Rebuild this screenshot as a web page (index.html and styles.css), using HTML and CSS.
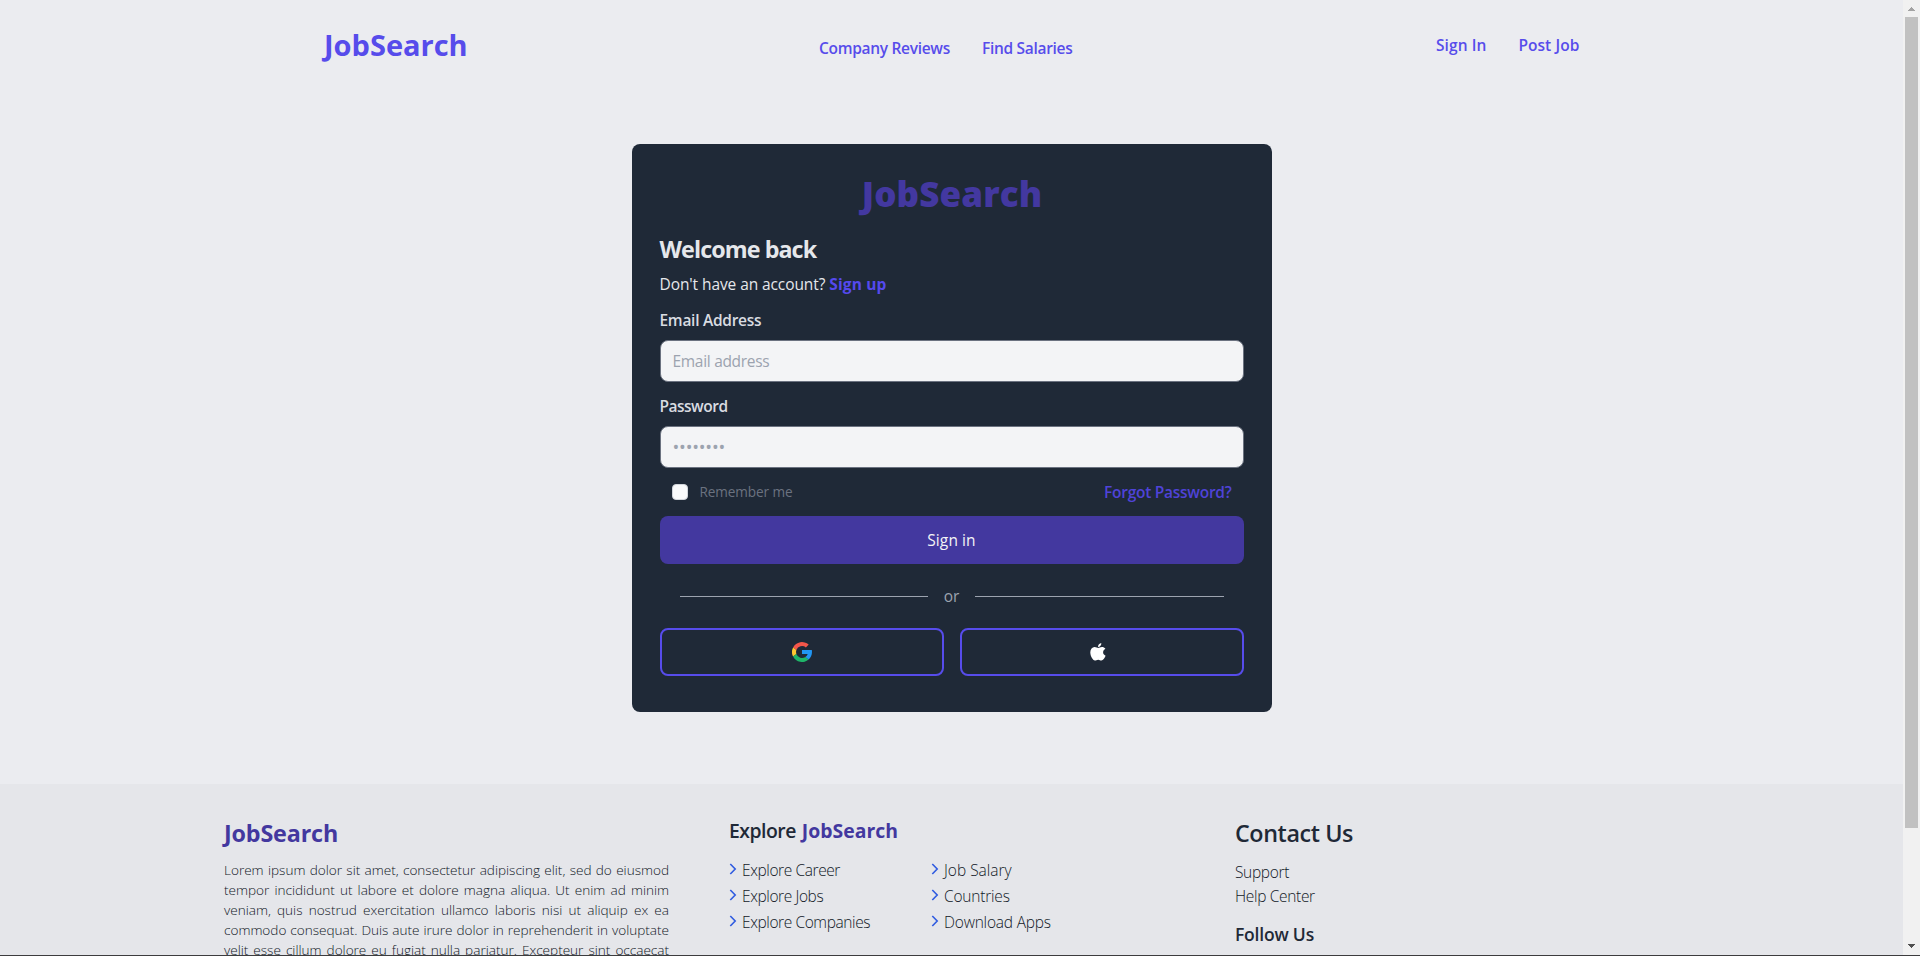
FILE: index.html
```html
<!DOCTYPE html>
<html lang="en">
<head>
<meta charset="utf-8">
<title>JobSearch</title>
<link rel="stylesheet" href="styles.css">
</head>
<body>
<div class="window">
  <div class="page">
    <header class="header">
      <a class="brand">JobSearch</a>
      <nav class="nav-main"><a class="nav-link">Company Reviews</a><a class="nav-link">Find Salaries</a></nav>
      <nav class="nav-user"><a class="signin-link">Sign In</a><a class="signin-link">Post Job</a></nav>
    </header>
    <main class="main">
      <form class="card">
        <h1 class="card-logo">JobSearch</h1>
        <h2 class="welcome">Welcome back</h2>
        <p class="signup"><span class="signup-text">Don't have an account?</span><a class="signup-link">Sign up</a></p>
        <label class="label" for="email">Email Address</label>
        <input class="input" id="email" type="text" placeholder="Email address">
        <label class="label label-password" for="password">Password</label>
        <input class="input input-password" id="password" type="password" placeholder="••••••••">
        <div class="options">
          <label class="remember"><span class="checkbox"></span>Remember me</label>
          <a class="forgot">Forgot Password?</a>
        </div>
        <button class="submit" type="button">Sign in</button>
        <div class="divider"><span class="rule"></span><span class="or">or</span><span class="rule"></span></div>
        <div class="providers">
          <button class="provider" type="button" aria-label="Google">
            <svg width="20" height="20" viewBox="0 0 20 20" fill="none">
              <path d="M1.100 5.400A10 10 0 0 1 16.700 2.600L13.900 5.400A6 6 0 0 0 4.400 8z" fill="#f4564a"/>
              <path d="M4.400 12A6 6 0 0 1 4.400 8L1.100 5.400a10 10 0 0 0 0 9.200z" fill="#ffc832"/>
              <path d="M1.100 14.600A10 10 0 0 0 16.600 17.500L13.400 15A6 6 0 0 1 4.400 12z" fill="#1fb569"/>
              <path d="M19.800 8H10v4h5.700a5.200 5.200 0 0 1-2.300 3l3.200 2.500c2.600-2.200 3.900-5.500 3.200-9.500z" fill="#2196f3"/>
            </svg>
          </button>
          <button class="provider provider-apple" type="button" aria-label="Apple">
            <svg width="16" height="18" viewBox="0 0 16 18" fill="#fff">
              <path d="M13.100 9.600c0-1.900.9-3.100 2.300-3.900-.9-1.200-2.100-1.700-3.500-1.700-1.500 0-2.800.9-3.600.9S6 4 4.600 4C2.200 4.100.3 6.100.3 9.300c0 3.800 2.500 8.200 4.600 8.200 1.200 0 1.700-.8 3.300-.8 1.500 0 2 .8 3.200.8 1.700 0 3.200-2.700 4.200-4.800-1.600-.7-2.500-1.800-2.500-3.100z"/>
              <path d="M8 4.100C7.900 2 9.600.3 11.300.100 11.600 2.200 9.900 4.100 8 4.100z"/>
            </svg>
          </button>
        </div>
      </form>
    </main>
    <footer class="footer">
      <section class="about">
        <h3 class="about-title">JobSearch</h3>
        <p class="about-text">Lorem ipsum dolor sit amet, consectetur adipiscing elit, sed do eiusmod<br>tempor incididunt ut labore et dolore magna aliqua. Ut enim ad minim<br>veniam, quis nostrud exercitation ullamco laboris nisi ut aliquip ex ea<br>commodo consequat. Duis aute irure dolor in reprehenderit in voluptate<br>velit esse cillum dolore eu fugiat nulla pariatur. Excepteur sint occaecat</p>
      </section>
      <section class="explore">
        <h3 class="explore-title"><span class="explore-word">Explore</span><span class="explore-brand">JobSearch</span></h3>
        <div class="links">
          <a class="link"><svg class="chevron" viewBox="0 0 8 12"><path d="M1.300 1 6.200 6l-4.900 5"/></svg>Explore Career</a>
          <a class="link link-wide"><svg class="chevron" viewBox="0 0 8 12"><path d="M1.300 1 6.200 6l-4.900 5"/></svg>Job Salary</a>
          <a class="link"><svg class="chevron" viewBox="0 0 8 12"><path d="M1.300 1 6.200 6l-4.900 5"/></svg>Explore Jobs</a>
          <a class="link link-mid"><svg class="chevron" viewBox="0 0 8 12"><path d="M1.300 1 6.200 6l-4.900 5"/></svg>Countries</a>
          <a class="link"><svg class="chevron" viewBox="0 0 8 12"><path d="M1.300 1 6.200 6l-4.900 5"/></svg>Explore Companies</a>
          <a class="link link-mid"><svg class="chevron" viewBox="0 0 8 12"><path d="M1.300 1 6.200 6l-4.900 5"/></svg>Download Apps</a>
        </div>
      </section>
      <section class="contact">
        <h3 class="contact-title">Contact Us</h3>
        <a class="contact-link">Support</a>
        <a class="contact-link">Help Center</a>
        <h4 class="follow">Follow Us</h4>
      </section>
    </footer>
  </div>
  <div class="scrollbar">
    <svg class="arrow" viewBox="0 0 17 17" fill="#a3a3a3" shape-rendering="crispEdges"><path d="M8 7h1v1h1v1h1v1h1v1H5v-1h1V9h1V8h1z"/></svg>
    <div class="thumb"></div>
    <svg class="arrow" viewBox="0 0 17 17" fill="#505050" shape-rendering="crispEdges"><path d="M5 6h7v1h-1v1h-1v1H9v1H8V9H7V8H6V7H5z"/></svg>
  </div>
</div>
</body>
</html>
```

FILE: styles.css
```css
* { box-sizing: border-box; }
body, h1, h2, h3, h4, p { margin: 0; }
body {
  font-family: "Open Sans", "Noto Sans", sans-serif;
  font-size: 15.5px;
  line-height: 24px;
  color: #1f2937;
  background: #ebecf0;
  overflow: hidden;
}
.window {
  display: flex;
  height: 956px;
  overflow: hidden;
  border-bottom: 1px solid #3c3c3e;
}
.page {
  display: flex;
  flex-direction: column;
  width: 1903px;
  height: 955px;
  overflow: hidden;
}

/* Header */
.header {
  display: grid;
  grid-template-columns: 495px 617px auto;
  align-items: start;
  height: 144px;
  padding: 27px 0 0 324px;
  flex-shrink: 0;
  color: #574ceb;
}
.brand { font-size: 29px; line-height: 36px; font-weight: 700; }
.nav-main { display: flex; gap: 32px; padding-top: 9px; }
.nav-link { font-weight: 600; letter-spacing: -0.3px; }
.nav-user { display: flex; gap: 32px; padding-top: 6px; }
.signin-link { font-weight: 600; letter-spacing: 0.07px; }

/* Sign-in card */
.main {
  display: flex;
  justify-content: center;
  align-items: flex-start;
  height: 640px;
  padding-right: 1px;
  margin-left: 1px;
  flex-shrink: 0;
}
.card {
  display: flex;
  flex-direction: column;
  width: 640px;
  height: 568px;
  padding: 30px 28px 36px;
  border-radius: 8px;
  background: #1f2937;
  color: #e5e7eb;
}
.card-logo {
  padding-left: 1px;
  text-align: center;
  font-size: 35px;
  line-height: 40px;
  font-weight: 800;
  letter-spacing: 0.1px;
  color: #4338a0;
}
.welcome {
  margin-top: 19px;
  font-size: 23.3px;
  line-height: 32px;
  font-weight: 700;
  letter-spacing: -0.92px;
}
.signup { display: flex; gap: 4px; margin-top: 7px; }
.signup-text { letter-spacing: -0.09px; }
.signup-link { font-weight: 700; color: #5549ee; letter-spacing: 0.15px; }
.label { margin-top: 12px; font-weight: 600; letter-spacing: -0.28px; color: #d9dce1; }
.label-password { letter-spacing: -0.5px; }
.input {
  height: 42px;
  margin: 8px 0 0;
  padding: 0 12px;
  border: 1px solid #6b7280;
  border-radius: 8px;
  background: #f3f4f6;
  font: 400 15.5px/24px "Open Sans", sans-serif;
  letter-spacing: -0.3px;
}
.input::placeholder { color: #9ca3af; opacity: 1; }
.input-password { font-size: 18px; letter-spacing: -0.2px; }
.options {
  display: flex;
  justify-content: space-between;
  align-items: center;
  height: 24px;
  margin-top: 12px;
  padding: 0 12px;
}
.remember {
  display: flex;
  align-items: center;
  gap: 12px;
  font-size: 13.6px;
  line-height: 20px;
  letter-spacing: -0.1px;
  color: #6b7280;
}
.checkbox {
  width: 16px;
  height: 16px;
  border: 1px solid #d1d5db;
  border-radius: 4px;
  background: #f9fafb;
}
.forgot { font-weight: 600; letter-spacing: -0.27px; color: #4f43d8; }
.submit {
  height: 48px;
  margin-top: 12px;
  padding: 0;
  border: 0;
  border-radius: 8px;
  background: #43389f;
  color: #f3f4f6;
  font: 400 15.5px/24px "Open Sans", sans-serif;
  letter-spacing: 0.1px;
}
.divider {
  display: flex;
  align-items: center;
  gap: 15.5px;
  margin: 20px 20px 0;
  color: #9ca3af;
}
.rule { flex: 1; height: 1px; background: #9ca3af; }
.providers { display: grid; grid-template-columns: 1fr 1fr; gap: 16px; margin-top: 20px; }
.provider {
  display: flex;
  justify-content: center;
  align-items: center;
  height: 48px;
  padding: 0;
  border: 2px solid #574ceb;
  border-radius: 8px;
  background: transparent;
}
.provider-apple { padding-right: 8px; }

/* Footer */
.footer {
  display: grid;
  grid-template-columns: 505px 506px 446px;
  align-items: start;
  height: 200px;
  padding: 33px 0 0 224px;
  flex-shrink: 0;
  background: #e5e6ea;
}
.about-title {
  font-size: 23.3px;
  line-height: 32px;
  font-weight: 700;
  letter-spacing: -0.15px;
  color: #43389f;
}
.about-text {
  width: 445px;
  margin-top: 11px;
  font-size: 13.6px;
  line-height: 20px;
  font-weight: 300;
  letter-spacing: -0.02px;
  word-spacing: -1px;
  color: #111827;
  text-align: justify;
  text-align-last: justify;
}
.explore-title { display: flex; gap: 6px; font-size: 19.4px; line-height: 28px; }
.explore-word { font-weight: 600; letter-spacing: -0.5px; }
.explore-brand { font-weight: 700; color: #43389f; }
.links {
  display: grid;
  grid-template-columns: 202px 200px;
  row-gap: 2px;
  margin-top: 13px;
}
.link {
  display: flex;
  align-items: center;
  gap: 5px;
  font-weight: 300;
  letter-spacing: -0.4px;
  color: #111827;
}
.link-mid { letter-spacing: -0.2px; }
.link-wide { letter-spacing: 0; }
.chevron {
  width: 8px;
  height: 12px;
  margin-bottom: 3px;
  fill: none;
  stroke: #2f5be0;
  stroke-width: 1.6;
}
.contact { display: flex; flex-direction: column; }
.contact-title {
  margin-bottom: 11px;
  font-size: 23.3px;
  line-height: 32px;
  font-weight: 600;
  letter-spacing: -0.4px;
}
.contact-link { font-weight: 300; letter-spacing: -0.33px; color: #111827; }
.follow {
  margin-top: 12px;
  font-size: 17.5px;
  line-height: 28px;
  font-weight: 600;
  letter-spacing: -0.2px;
}

/* Scrollbar */
.scrollbar { display: flex; flex-direction: column; width: 17px; height: 955px; background: #f1f1f1; }
.arrow { width: 17px; height: 17px; }
.thumb { width: 13px; height: 811px; margin: 0 2px 110px; background: #c1c1c1; }
```
